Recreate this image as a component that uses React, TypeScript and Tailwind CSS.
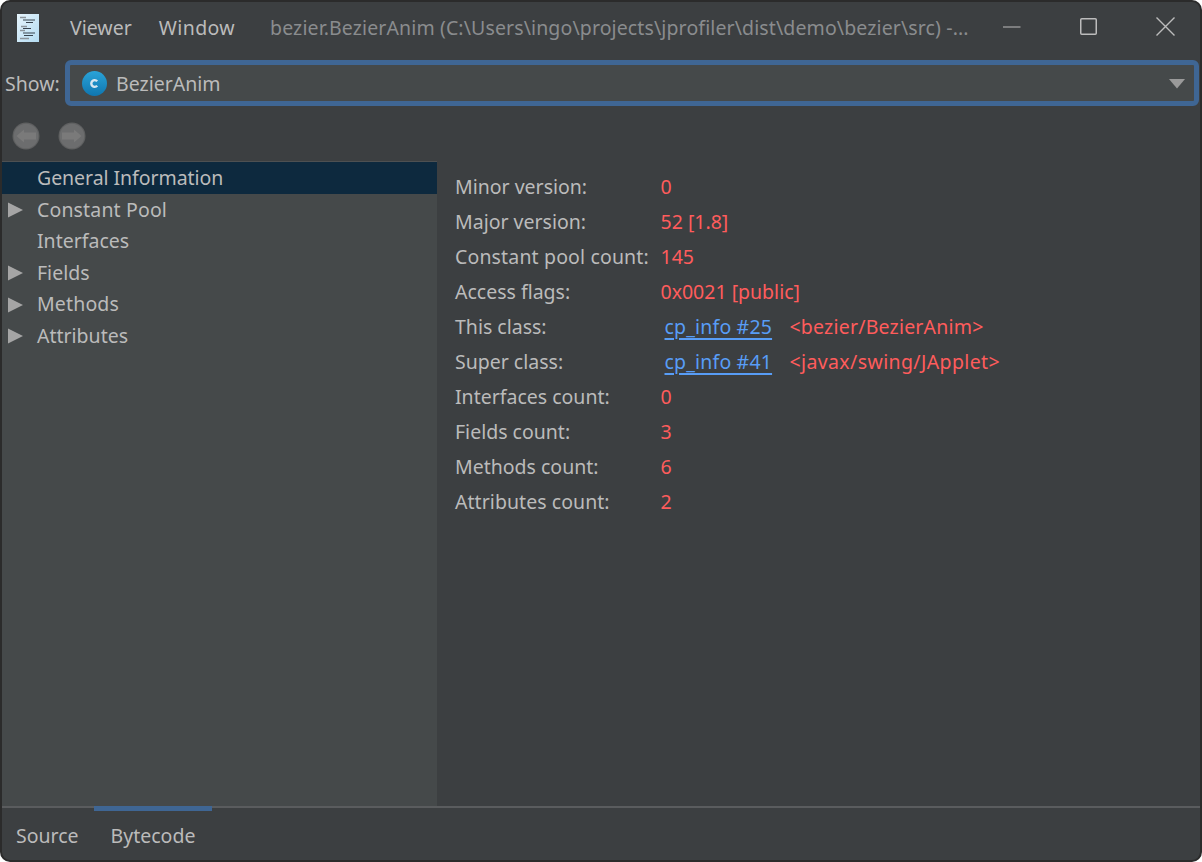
import React from "react";

const font = { fontFamily: '"Noto Sans", "Open Sans", sans-serif' };

function Arrow({ dir }: { dir: "left" | "right" }) {
  return (
    <svg width="28" height="28" viewBox="0 0 28 28" className="block">
      <circle cx="14" cy="14" r="13.5" fill="#5f6061" />
      <circle cx="14" cy="14" r="12.3" fill="#6c6d6e" />
      {dir === "left" ? (
        <path d="M4.5 14 L12 7.5 V10.5 H24 V17.5 H12 V20.5 Z" fill="#7a7a7a" />
      ) : (
        <path d="M23.5 14 L16 7.5 V10.5 H4 V17.5 H16 V20.5 Z" fill="#7a7a7a" />
      )}
    </svg>
  );
}

function TreeRow({ label, arrow, selected, className = "" }: { label: string; arrow?: boolean; selected?: boolean; className?: string }) {
  return (
    <div className={`flex items-center h-[31.5px] text-[#bbbbbb] ${selected ? "bg-[#0d293e]" : ""}`}>
      <div className="w-[35px] flex pl-[6px] pt-[2px]">
        {arrow && (
          <svg width="15" height="16" viewBox="0 0 15 16">
            <path d="M0 0.5 L15 8 L0 15.5 Z" fill="#a5a5a5" />
          </svg>
        )}
      </div>
      <span className={`leading-none ${className}`}>{label}</span>
    </div>
  );
}

function InfoRow({ label, labelClass = "", children }: { label: string; labelClass?: string; children: React.ReactNode }) {
  return (
    <div className="flex items-center h-[35px]">
      <div className={`w-[205.5px] text-[#bbbbbb] whitespace-nowrap ${labelClass}`}>{label}</div>
      <div className="flex items-center text-[#ff5c5c] whitespace-nowrap">{children}</div>
    </div>
  );
}

function Link({ text, target, targetClass }: { text: string; target: string; targetClass: string }) {
  return (
    <>
      <span className="ml-[4px] w-[125px] text-[#589df6] tracking-[0.18px] underline decoration-[2px] underline-offset-[4px]">{text}</span>
      <span className={targetClass}>{target}</span>
    </>
  );
}

export default function App() {
  return (
    <div className="w-[1202px] h-[862px] bg-white overflow-hidden">
      <div
        style={font}
        className="w-full h-full flex flex-col bg-[#3c3f41] border-2 border-[#2b2b2b] rounded-[10px] overflow-hidden text-[19.5px] text-[#bbbbbb]"
      >
        <div className="h-[52px] shrink-0 flex items-center">
          <svg width="22" height="28" viewBox="0 0 22 28" className="ml-[15px] mr-[31px] shrink-0 -mt-[1px]">
            <defs>
              <linearGradient id="doc" x1="0" y1="0" x2="1" y2="1">
                <stop offset="0" stopColor="#e6f4fc" />
                <stop offset="1" stopColor="#b4dcf2" />
              </linearGradient>
            </defs>
            <rect width="22" height="28" fill="url(#doc)" />
            <path d="M3 3.5h6M4 12.5h6M3 16.5h5M3 24.5h9" stroke="#8b949b" strokeWidth="1.6" fill="none" />
            <path d="M6 6h12M9 8.5h7M6 14.5h8M6 19h12M7 21.5h9" stroke="#39444e" strokeWidth="1.2" fill="none" />
          </svg>
          <span>Viewer</span>
          <span className="ml-[27px] tracking-[0.4px]">Window</span>
          <span className="ml-[35px] text-[#8a8c8e] whitespace-nowrap tracking-[0.12px]">
            bezier.BezierAnim (C:\Users\ingo\projects\jprofiler\dist\demo\bezier\src) -...
          </span>
          <div className="ml-auto flex items-center pr-[25px] gap-[59px] -mt-[3px]">
            <svg width="18" height="18" viewBox="0 0 18 18">
              <path d="M0 9H17.5" stroke="#bcbcbc" strokeWidth="1.2" />
            </svg>
            <svg width="17" height="17" viewBox="0 0 17 17">
              <rect x="0.75" y="0.75" width="15.5" height="15.5" rx="1" fill="none" stroke="#bcbcbc" strokeWidth="1.5" />
            </svg>
            <svg width="19" height="19" viewBox="0 0 19 19">
              <path d="M0.5 0.5L18.5 18.5M18.5 0.5L0.5 18.5" stroke="#bcbcbc" strokeWidth="1.4" />
            </svg>
          </div>
        </div>

        <div className="h-[52px] shrink-0 flex items-center pl-[3px] pr-[1px] pt-[6px]">
          <span className="w-[60px] mt-[2px]">Show:</span>
          <div className="flex-1 h-[46px] border-[5px] border-[#3f6694] rounded-[6px] bg-[#45494a] flex items-center pl-[12px] pr-[9px]">
            <svg width="25" height="25" viewBox="0 0 25 25" className="mr-[9px]">
              <defs>
                <linearGradient id="g" x1="0" y1="0" x2="0" y2="1">
                  <stop offset="0" stopColor="#2aa3d8" />
                  <stop offset="1" stopColor="#0f76b0" />
                </linearGradient>
              </defs>
              <circle cx="12.5" cy="12.5" r="12.5" fill="url(#g)" />
              <path d="M15.2 10.2A3.4 3.4 0 1 0 15.2 14.8" fill="none" stroke="#d6e6f0" strokeWidth="2.4" />
            </svg>
            <span className="mt-[2px]">BezierAnim</span>
            <svg width="16" height="10" viewBox="0 0 16 10" className="ml-auto mt-[2px]">
              <path d="M0 0H16L8 9.5Z" fill="#9a9a9a" />
            </svg>
          </div>
        </div>

        <div className="h-[55px] shrink-0 flex items-center pl-[10px] pt-[5px] gap-[18px]">
          <Arrow dir="left" />
          <Arrow dir="right" />
        </div>

        <div className="flex-1 flex min-h-0">
          <div className="w-[435px] shrink-0 bg-[#45494a] border-t border-[#4d5052]">
            <TreeRow label="General Information" selected className="tracking-[-0.05px]" />
            <TreeRow label="Constant Pool" arrow className="tracking-[0.15px]" />
            <TreeRow label="Interfaces" />
            <TreeRow label="Fields" arrow />
            <TreeRow label="Methods" arrow className="tracking-[0.15px]" />
            <TreeRow label="Attributes" arrow />
          </div>
          <div className="flex-1 pl-[18px] pt-[8px]">
            <InfoRow label="Minor version:">0</InfoRow>
            <InfoRow label="Major version:">52 [1.8]</InfoRow>
            <InfoRow label="Constant pool count:" labelClass="tracking-[0.15px]">145</InfoRow>
            <InfoRow label="Access flags:">0x0021 [public]</InfoRow>
            <InfoRow label="This class:">
              <Link text="cp_info #25" target="<bezier/BezierAnim>" targetClass="tracking-[0.21px]" />
            </InfoRow>
            <InfoRow label="Super class:">
              <Link text="cp_info #41" target="<javax/swing/JApplet>" targetClass="tracking-[0.38px]" />
            </InfoRow>
            <InfoRow label="Interfaces count:">0</InfoRow>
            <InfoRow label="Fields count:">3</InfoRow>
            <InfoRow label="Methods count:">6</InfoRow>
            <InfoRow label="Attributes count:" labelClass="tracking-[0.06px]">2</InfoRow>
          </div>
        </div>

        <div className="h-[54px] shrink-0 relative border-t-2 border-[#5a5c5e] flex items-center pl-[14px] pt-[3px]">
          <div className="absolute left-[92px] top-[-2px] w-[118px] h-[5px] bg-[#3f6694]" />
          <span>Source</span>
          <span className="ml-[32px]">Bytecode</span>
        </div>
      </div>
    </div>
  );
}
